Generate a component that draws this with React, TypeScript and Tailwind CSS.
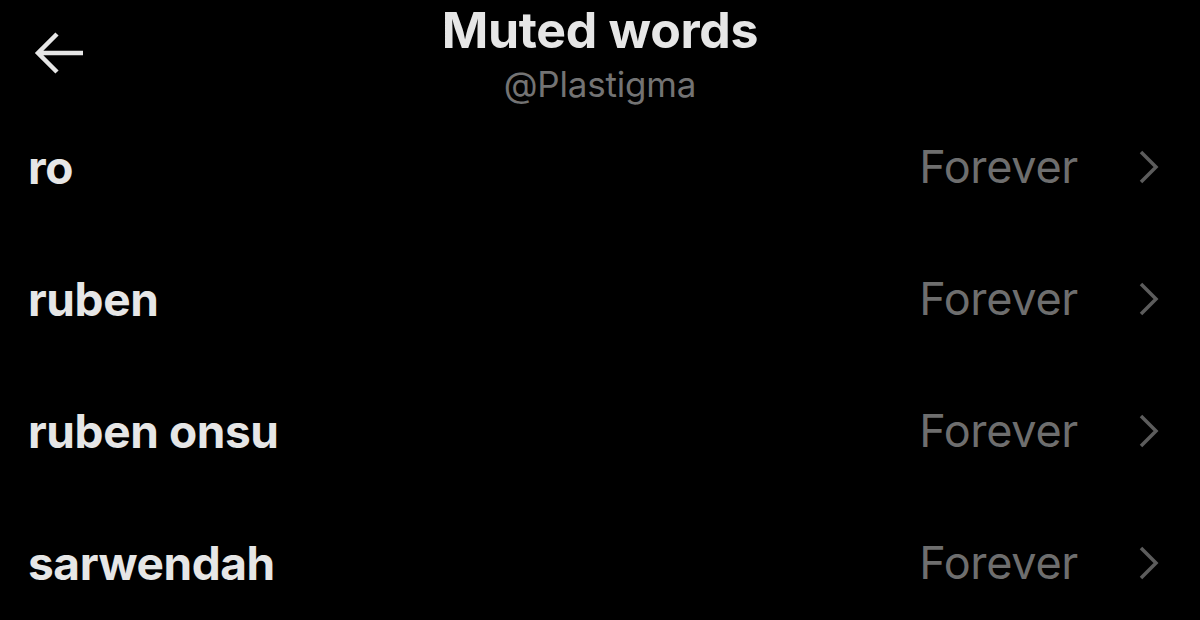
import React from "react";

const rows = ["ro", "ruben", "ruben onsu", "sarwendah"];

export default function App() {
  return (
    <div
      className="w-[1200px] h-[620px] bg-black overflow-hidden"
      style={{ fontFamily: "Inter, 'Liberation Sans', sans-serif" }}
    >
      <div className="relative h-[101px] flex flex-col items-center">
        <div className="absolute left-[33px] top-[29px]">
          <svg width="52" height="48" viewBox="0 0 52 48" fill="none">
            <path
              d="M50 24H5M24 5L5 24L24 43"
              stroke="#e6e6e6"
              strokeWidth="4.5"
              strokeLinecap="butt"
              strokeLinejoin="miter"
            />
          </svg>
        </div>
        <div className="mt-[3px] text-[50px] leading-[54px] font-bold text-[#e6e6e6] tracking-[-0.3px]">
          Muted words
        </div>
        <div className="mt-[8px] text-[35px] leading-[38px] text-[#737373] tracking-[-0.2px]">
          @Plastigma
        </div>
      </div>
      {rows.map((r) => (
        <div key={r} className="h-[132px] flex items-center pl-[28px] pr-[40px]">
          <div className="flex-1 text-[46px] font-bold text-[#e6e6e6] tracking-[-0.4px]">
            {r}
          </div>
          <div className="text-[45px] text-[#6e6e6e] tracking-[-0.3px]">Forever</div>
          <div className="ml-[60px]">
            <svg width="22" height="36" viewBox="0 0 22 36" fill="none">
              <path d="M3 3L18 18L3 33" stroke="#5c5c5c" strokeWidth="3.5" />
            </svg>
          </div>
        </div>
      ))}
    </div>
  );
}
